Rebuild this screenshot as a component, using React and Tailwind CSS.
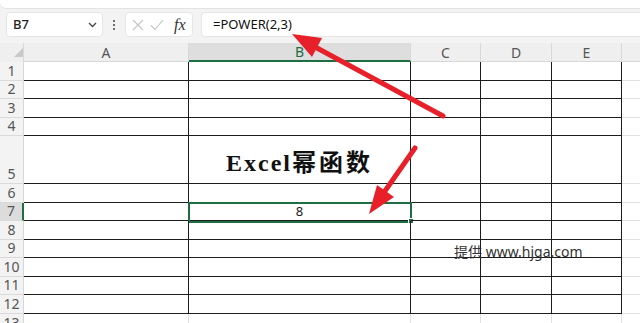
import React from 'react'

const rows = [
  { n: 1, h: 'h-[19px]' },
  { n: 2, h: 'h-[18px]' },
  { n: 3, h: 'h-[19px]' },
  { n: 4, h: 'h-[18px]' },
  { n: 5, h: 'h-[48px]' },
  { n: 6, h: 'h-[19px]' },
  { n: 7, h: 'h-[18px]' },
  { n: 8, h: 'h-[19px]' },
  { n: 9, h: 'h-[18px]' },
  { n: 10, h: 'h-[19px]' },
  { n: 11, h: 'h-[18px]' },
  { n: 12, h: 'h-[19px]' },
  { n: 13, h: 'h-[19px]' },
]

const cols = [
  { k: 'A', w: 'w-[165px]' },
  { k: 'B', w: 'w-[222px]' },
  { k: 'C', w: 'w-[70px]' },
  { k: 'D', w: 'w-[71px]' },
  { k: 'E', w: 'w-[70px]' },
]

function Cell({ col, row }) {
  const last = row.n === 13
  const border = last ? 'border-r border-[#e1e1e1]' : 'border-r border-b border-[#1c1c1c]'
  const selected = col.k === 'B' && row.n === 7
  return (
    <div className={`${col.w} h-full shrink-0 relative flex items-center justify-center ${border}`}>
      {col.k === 'B' && row.n === 5 && (
        <span className="font-bold text-[24px] leading-none pt-[4px] text-[#111]">
          <span className="tracking-[2px]" style={{ fontFamily: '"Liberation Serif", serif' }}>Excel</span>
          <span className="tracking-[3px]" style={{ fontFamily: '"Noto Sans CJK SC", sans-serif' }}>幂函数</span>
        </span>
      )}
      {selected && (
        <>
          <span className="text-[13px] text-[#222]">8</span>
          <div className="absolute -left-[1px] -top-[1px] w-[224px] h-[21px] border-2 border-[#1f6e43]" />
          <div className="absolute -right-[4px] -bottom-[4px] w-[6px] h-[6px] bg-[#1f6e43] border border-white" />
        </>
      )}
    </div>
  )
}

export default function App() {
  return (
    <div className="w-[640px] h-[323px] relative overflow-hidden bg-[#f3f3f3] text-[#333]" style={{ fontFamily: '"Noto Sans", "Noto Sans CJK SC", sans-serif' }}>
      <div className="h-[9px] bg-white rounded-bl-[6px] border-b border-[#e3e3e3]" />

      {/* formula bar */}
      <div className="h-[34px] flex items-start pt-[3px]">
        <div className="ml-[6px] w-[97px] h-[25px] bg-white rounded-[4px] border border-[#e6e6e6] flex items-center justify-between pl-[6px] pr-[5px]">
          <span className="text-[13px] font-medium text-[#222]">B7</span>
          <svg width="9" height="6" viewBox="0 0 9 6"><path d="M1 1l3.5 3.5L8 1" fill="none" stroke="#444" strokeWidth="1.3" /></svg>
        </div>
        <div className="w-[22px] h-[25px] flex flex-col items-center justify-center gap-[2px]">
          <span className="w-[2px] h-[2px] bg-[#444] rounded-full" />
          <span className="w-[2px] h-[2px] bg-[#444] rounded-full" />
          <span className="w-[2px] h-[2px] bg-[#444] rounded-full" />
        </div>
        <div className="w-[68px] h-[25px] bg-white rounded-[4px] border border-[#e6e6e6] flex items-center pl-[6px] gap-[6px]">
          <svg width="12" height="12" viewBox="0 0 12 12"><path d="M1 1l10 10M11 1L1 11" stroke="#c4c4c4" strokeWidth="1.1" /></svg>
          <svg width="14" height="12" viewBox="0 0 14 12"><path d="M1 6.5l4 4L13 1" fill="none" stroke="#c4c4c4" strokeWidth="1.1" /></svg>
          <span className="italic text-[16px] leading-none text-[#333] ml-[4px]" style={{ fontFamily: '"Liberation Serif", serif' }}>fx</span>
        </div>
        <div className="ml-[8px] flex-1 h-[25px] bg-white rounded-l-[4px] border border-r-0 border-[#e6e6e6] flex items-center pl-[11px]">
          <span className="text-[13px] text-[#111]">=POWER(2,3)</span>
        </div>
      </div>

      {/* column header */}
      <div className="h-[19px] flex bg-[#efefef]">
        <div className="w-[24px] shrink-0 relative border-r border-[#d8d8d8]">
          <svg className="absolute left-[14px] top-[5px]" width="9" height="9" viewBox="0 0 9 9"><path d="M9 0V9H0z" fill="#c8c8c8" /></svg>
        </div>
        {cols.map((c) => (
          <div
            key={c.k}
            className={`${c.w} shrink-0 flex items-center justify-center text-[14px] border-r ${c.k === 'B' ? 'bg-[#dedede] text-[#1f6e43] border-b-2 border-b-[#1f6e43] border-r-[#d8d8d8]' : 'text-[#555] border-[#d8d8d8] border-b border-b-[#d8d8d8]'}`}
          >
            {c.k}
          </div>
        ))}
        <div className="flex-1 border-b border-[#d8d8d8]" />
      </div>

      {/* grid */}
      <div className="bg-white">
        {rows.map((r) => (
          <div key={r.n} className={`${r.h} flex`}>
            <div className={`w-[24px] shrink-0 flex items-end justify-center text-[14px] leading-[18px] border-b border-[#dadada] ${r.n === 7 ? 'bg-[#dcdcdc] border-r-2 border-r-[#1f6e43] text-[#555]' : 'bg-[#f3f3f3] border-r border-r-[#d8d8d8] text-[#555]'}`}>
              {r.n}
            </div>
            {cols.map((c) => (
              <Cell key={c.k} col={c} row={r} />
            ))}
            <div className="flex-1 border-b border-[#e1e1e1]" />
          </div>
        ))}
      </div>

      <div className="absolute left-[454px] top-[241px] text-[14px] text-[#333] whitespace-nowrap">提供 www.hjga.com</div>

      <svg className="absolute left-0 top-0 pointer-events-none" width="640" height="323" viewBox="0 0 640 323">
        <line x1="443" y1="116" x2="317" y2="48" stroke="#e8202a" strokeWidth="5" strokeLinecap="round" />
        <polygon points="292,34 322,38 312,57" fill="#e8202a" />
        <line x1="415" y1="148" x2="385" y2="191" stroke="#e8202a" strokeWidth="5" strokeLinecap="round" />
        <polygon points="369,214 394,197 377,185" fill="#e8202a" />
      </svg>
    </div>
  )
}
